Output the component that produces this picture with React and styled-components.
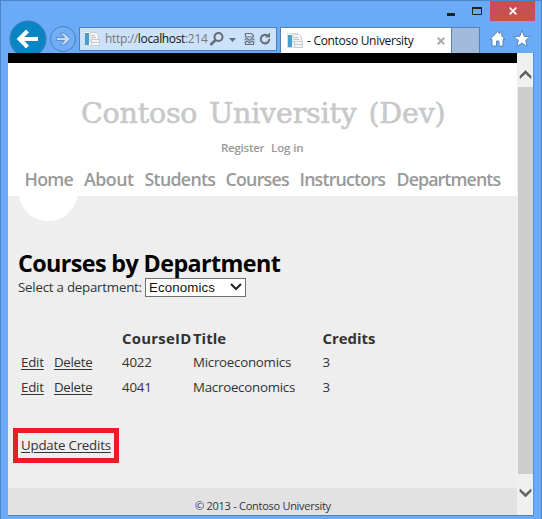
import React from "react";
import styled, { createGlobalStyle } from "styled-components";

const Global = createGlobalStyle`
  *, *::before, *::after { box-sizing: border-box; }
  body { margin: 0; overflow: hidden; font-family: "Open Sans", "Noto Sans", sans-serif; }
`;

const Label = styled.span`
  display: block;
  white-space: pre;
  letter-spacing: ${(p) => p.$track || 0}px;
`;

const Window = styled.div`
  width: 542px;
  height: 519px;
  display: flex;
  flex-direction: column;
  background: #6aabf7;
  border-left: 1px solid #4c86c8;
  border-top: 1px solid #4c86c8;
  border-right: 1px solid #4c86c8;
`;

const TitleBar = styled.div`
  height: 20px;
  display: flex;
  justify-content: flex-end;
  padding-right: 6px;
`;

const Control = styled.div`
  width: ${(p) => p.$width}px;
  height: 20px;
  display: flex;
  justify-content: center;
  align-items: center;
  background: ${(p) => p.$bg || "transparent"};
`;

const Toolbar = styled.div`
  height: 32px;
  display: flex;
  align-items: flex-start;
  padding-left: 7px;
`;

const NavButtons = styled.svg`
  flex: none;
  width: 71px;
  height: 33px;
  margin-top: -1px;
`;

const AddressBar = styled.div`
  flex: none;
  width: 198px;
  height: 24px;
  margin-top: 6px;
  display: flex;
  align-items: center;
  background: #cce2fb;
  border: 1px solid #5181b8;
  padding-left: 4px;
  font-size: 12px;
`;

const Url = styled(Label)`
  flex: none;
  width: 101px;
  margin: 0 1px 0 5px;
  line-height: 22px;
  color: #777;
  b { font-weight: 400; color: #111; }
`;

const AddressIcons = styled.svg`
  flex: none;
  width: 68px;
  height: 22px;
`;

const Tab = styled.div`
  flex: none;
  width: 171px;
  height: 26px;
  margin: 6px 0 0 3px;
  padding: 0 6px 0 6px;
  display: flex;
  align-items: center;
  background: #fff;
  border: solid #5181b8;
  border-width: 1px 0 0 1px;
  font-size: 12px;
  color: #111;
  ${Label} { margin-left: 4px; line-height: 28px; flex: 1; }
`;

const NewTab = styled.div`
  flex: none;
  width: 29px;
  height: 26px;
  margin-top: 6px;
  background: #a3bbda;
  border: 1px solid #5181b8;
  border-bottom: 0;
`;

const Shortcuts = styled.svg`
  flex: none;
  width: 48px;
  height: 26px;
  margin: 6px 0 0 7px;
`;

const Viewport = styled.div`
  width: 526px;
  height: 463px;
  margin-left: 7px;
  display: flex;
  border-bottom: 1px solid #5181b8;
  border-right: 1px solid #5596e2;
`;

const Page = styled.div`
  width: 509px;
  display: flex;
  flex-direction: column;
  background: #eee;
  color: #333;
  font-size: 13.3px;
`;

const Header = styled.header`
  height: 143px;
  border-top: 10px solid #000;
  background: #fff;
  display: flex;
  flex-direction: column;
`;

const SiteTitle = styled(Label)`
  margin: 32px 0 0 73px;
  font: 400 28.5px/38px "DejaVu Serif", serif;
  word-spacing: 3px;
  color: #c8c8c8;
  -webkit-text-stroke: 0.6px #c8c8c8;
`;

const Account = styled.div`
  display: flex;
  margin: 6px 0 0 213px;
  font-size: 11.5px;
  font-weight: 600;
  line-height: 18px;
  color: #999;
  ${Label} { flex: none; width: 50px; }
`;

const Menu = styled.nav`
  display: grid;
  grid-template-columns: 59.5px 60.5px 81px 74px 97px 110px;
  margin: 10px 0 0 16.5px;
  font-size: 17.8px;
  font-weight: 600;
  line-height: 24px;
  color: #999;
`;

const Bulge = styled.div`
  width: 60px;
  height: 25px;
  margin-left: 10px;
  background: radial-gradient(circle at 30.3px -4.5px, #fff 29px, transparent 30px);
`;

const Main = styled.main`
  height: 267px;
  padding-left: 10px;
`;

const Heading = styled.h1`
  margin: 25px 0 0;
  font-size: 23.3px;
  line-height: 34px;
  font-weight: 700;
  color: #000;
`;

const Filter = styled.div`
  display: flex;
  height: 20px;
  line-height: 14px;
  > ${Label} { width: 127px; }
`;

const Select = styled.div`
  width: 101px;
  height: 19px;
  margin-top: -2px;
  border: 1px solid #707070;
  background: #fff;
  display: flex;
  padding-left: 3px;
  font: 13.3px/17px "Liberation Sans", sans-serif;
  color: #111;
  ${Label} { width: 81px; }
  svg { margin-top: 3px; }
`;

const Row = styled.div`
  display: grid;
  grid-template-columns: 33px 68px 71px 129.5px 80px;
  height: 25px;
  line-height: 25px;
  margin-left: 3px;
  font-weight: ${(p) => (p.$head ? 700 : 400)};
  font-size: ${(p) => (p.$head ? 14.9 : 13.3)}px;
  ${(p) => p.$head && "margin-top: 26px; height: 24px;"}
`;

const Link = styled(Label)`
  justify-self: start;
  text-decoration: underline;
  text-underline-offset: 2px;
`;

const Highlight = styled.div`
  width: 106px;
  height: 35px;
  margin: 28px 0 0 -5px;
  padding-left: 3px;
  border: 5px solid #ed1c24;
  line-height: 24px;
`;

const Footer = styled.footer`
  height: 27px;
  background: #e2e2e2;
  font-size: 11px;
  line-height: 36px;
  padding-left: 187px;
  overflow: hidden;
`;

const Scrollbar = styled.div`
  width: 16px;
  background: #f0f0f0;
  display: flex;
  flex-direction: column;
  align-items: center;
  svg { flex: none; }
`;

const Thumb = styled.div`
  width: 15px;
  height: 387px;
  margin-left: 1px;
  background: #cdcdcd;
`;

const PageIcon = () => (
  <svg width="16" height="16" viewBox="0 0 16 16">
    <rect x=".5" y=".5" width="10" height="14" fill="#fff" stroke="#d6dde4" />
    <rect x="1" y="2" width="4" height="12" fill="#449fd0" />
    <path d="M6 1.500h6l2.500 2.500v7H6z" fill="#f5f5f5" stroke="#cbd0d6" />
    <path d="M7 4.500h4M7 6.500h5" stroke="#bdc4ca" />
    <rect x="7.500" y="8.500" width="8" height="6" fill="#f4f4f4" stroke="#c8cdd2" />
    <path d="M8 11.500h7" stroke="#c8cdd2" />
  </svg>
);

const ScrollArrow = ({ up }) => (
  <svg width="16" height={up ? 34 : 41} viewBox={`0 0 16 ${up ? 34 : 41}`}>
    <path d={up ? "M3 25v-2L8.500 17.500l5.500 5.500v2.500L8.500 20.500l-5.500 5z" : "M3 15v2.500L8.500 23l5.500-5.500V15L8.500 20z"} fill="#606060" stroke="#606060" strokeWidth=".7" />
  </svg>
);

const courses = [
  { id: "4022", title: "Microeconomics", credits: "3" },
  { id: "4041", title: "Macroeconomics", credits: "3" },
];

const menu = [
  ["Home", -0.7],
  ["About", -0.5],
  ["Students", -0.7],
  ["Courses", -0.75],
  ["Instructors", -0.8],
  ["Departments", -0.9],
];

export default function App() {
  return (
    <>
      <Global />
      <Window>
        <TitleBar>
          <Control $width={26}>
            <svg width="8" height="20"><path d="M0 12h8v3H0z" fill="#222" /></svg>
          </Control>
          <Control $width={26}>
            <svg width="10" height="20"><path d="M.5 6.500h9v7h-9z" fill="none" stroke="#222" /><path d="M0 6h10v2H0z" fill="#222" /></svg>
          </Control>
          <Control $width={45} $bg="#c75050">
            <svg width="8" height="8"><path d="M.7.7l6.600 6.600M7.300.7L.7 7.300" stroke="#fff" strokeWidth="1.8" /></svg>
          </Control>
        </TitleBar>
        <Toolbar>
          <NavButtons viewBox="0 0 71 33">
            <circle cx="20" cy="19" r="18" fill="#0785c5" stroke="#4777a8" />
            <path d="M11 19h19M19.500 11L11.500 19l8 8" fill="none" stroke="#fff" strokeWidth="4" />
            <circle cx="55" cy="19" r="12.500" fill="#70aef5" stroke="#4c80ba" />
            <path d="M48.500 17.500h8l-4-4.500h3.500l6.500 6-6.500 6h-3.500l4-4.500h-8z" fill="#c3dcf9" stroke="#4c80ba" strokeWidth=".8" />
          </NavButtons>
          <AddressBar>
            <PageIcon />
            <Url $track={-0.34}>http://<b>localhost</b>:214</Url>
            <AddressIcons viewBox="0 0 68 22">
              <circle cx="11.500" cy="9" r="4" fill="none" stroke="#636c77" strokeWidth="2" />
              <path d="M8.500 12l-5 5" stroke="#636c77" strokeWidth="2.500" />
              <path d="M22 10h7l-3.500 4z" fill="#636c77" />
              <path d="M38.500 9V5.500h6l2 2V9zM38.500 14.500v2h8v-2M37.500 12l2.500-1.500 2.500 2 2.500-2 2.500 1.500M37.500 14.500l2.500-1.500 2.500 2 2.500-2 2.500 1.500" fill="none" stroke="#68717c" strokeWidth="1.200" />
              <path d="M60.500 7.600A4.300 4.300 0 1 0 62.300 11" fill="none" stroke="#636c77" strokeWidth="2" />
              <path d="M58 9.500h5V4.500z" fill="#636c77" />
            </AddressIcons>
          </AddressBar>
          <Tab>
            <PageIcon />
            <Label $track={-0.3}>- Contoso University</Label>
            <svg width="8" height="8"><path d="M.8.8l6.400 6.400M7.200.8L.8 7.200" stroke="#aaa" strokeWidth="2" /></svg>
          </Tab>
          <NewTab />
          <Shortcuts viewBox="0 0 48 26">
            <path d="M3 12.500L10.500 4.500l2.300 2.300V5h2v4l3.200 3.500H16V19h-4v-5H9.500v5H5v-6.500z" fill="#fff" stroke="#4e7fb2" strokeWidth=".9" />
            <path d="M35 3.500l2.200 5.800 6.300.2-4.900 3.900 1.700 6.100-5.300-3.500-5.300 3.500 1.700-6.100-4.900-3.900 6.300-.2z" fill="#fff" stroke="#4e7fb2" strokeWidth=".9" />
          </Shortcuts>
        </Toolbar>
        <Viewport>
          <Page>
            <Header>
              <SiteTitle $track={-0.2}>Contoso University (Dev)</SiteTitle>
              <Account>
                <Label $track={-0.25}>Register</Label>
                <Label $track={-0.1}>Log in</Label>
              </Account>
              <Menu>
                {menu.map(([name, track]) => <Label key={name} $track={track}>{name}</Label>)}
              </Menu>
            </Header>
            <Bulge />
            <Main>
              <Heading><Label $track={-0.6}>Courses by Department</Label></Heading>
              <Filter>
                <Label $track={-0.23}>Select a department:</Label>
                <Select>
                  <Label $track={0.1}>Economics</Label>
                  <svg width="12" height="10"><path d="M1 2l5 5 5-5" fill="none" stroke="#222" strokeWidth="2" /></svg>
                </Select>
              </Filter>
              <Row $head>
                <span /><span />
                <Label $track={0.25}>CourseID</Label>
                <Label>Title</Label>
                <Label>Credits</Label>
              </Row>
              {courses.map((c) => (
                <Row key={c.id}>
                  <Link $track={-0.2}>Edit</Link>
                  <Link $track={-0.3}>Delete</Link>
                  <Label $track={-0.2}>{c.id}</Label>
                  <Label $track={-0.25}>{c.title}</Label>
                  <Label>{c.credits}</Label>
                </Row>
              ))}
              <Highlight><Link $track={-0.22}>Update Credits</Link></Highlight>
            </Main>
            <Footer><Label $track={-0.27}>© 2013 - Contoso University</Label></Footer>
          </Page>
          <Scrollbar>
            <ScrollArrow up />
            <Thumb />
            <ScrollArrow />
          </Scrollbar>
        </Viewport>
      </Window>
    </>
  );
}
